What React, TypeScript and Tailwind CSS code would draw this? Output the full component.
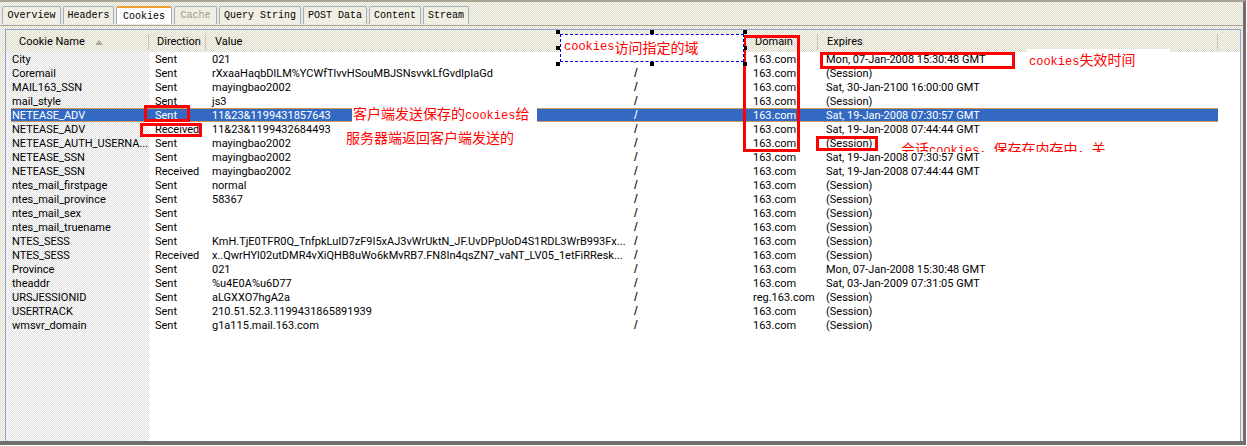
import React from 'react'

const tabs = [
  { label: 'Overview', w: 'w-[59px]' },
  { label: 'Headers', w: 'w-[51px]' },
  { label: 'Cookies', w: 'w-[56px]', active: true },
  { label: 'Cache', w: 'w-[43px]', disabled: true },
  { label: 'Query String', w: 'w-[82px]' },
  { label: 'POST Data', w: 'w-[64px]' },
  { label: 'Content', w: 'w-[52px]' },
  { label: 'Stream', w: 'w-[46px]' },
]

const s2100 = 'Sat, 30-Jan-2100 16:00:00 GMT'
const jan7 = 'Mon, 07-Jan-2008 15:30:48 GMT'
const jan19a = 'Sat, 19-Jan-2008 07:30:57 GMT'
const jan19b = 'Sat, 19-Jan-2008 07:44:44 GMT'
const sess = '(Session)'

const rows = [
  ['City', 'Sent', '021', '163.com', jan7],
  ['Coremail', 'Sent', 'rXxaaHaqbDlLM%YCWfTlvvHSouMBJSNsvvkLfGvdIpIaGd', '163.com', sess],
  ['MAIL163_SSN', 'Sent', 'mayingbao2002', '163.com', s2100],
  ['mail_style', 'Sent', 'js3', '163.com', sess],
  ['NETEASE_ADV', 'Sent', '11&23&1199431857643', '163.com', jan19a],
  ['NETEASE_ADV', 'Received', '11&23&1199432684493', '163.com', jan19b],
  ['NETEASE_AUTH_USERNA...', 'Sent', 'mayingbao2002', '163.com', sess],
  ['NETEASE_SSN', 'Sent', 'mayingbao2002', '163.com', jan19a],
  ['NETEASE_SSN', 'Received', 'mayingbao2002', '163.com', jan19b],
  ['ntes_mail_firstpage', 'Sent', 'normal', '163.com', sess],
  ['ntes_mail_province', 'Sent', '58367', '163.com', sess],
  ['ntes_mail_sex', 'Sent', '', '163.com', sess],
  ['ntes_mail_truename', 'Sent', '', '163.com', sess],
  ['NTES_SESS', 'Sent', 'KmH.TjE0TFR0Q_TnfpkLuID7zF9I5xAJ3vWrUktN_JF.UvDPpUoD4S1RDL3WrB993Fx...', '163.com', sess],
  ['NTES_SESS', 'Received', 'x..QwrHYl02utDMR4vXiQHB8uWo6kMvRB7.FN8In4qsZN7_vaNT_LV05_1etFiRResk...', '163.com', sess],
  ['Province', 'Sent', '021', '163.com', jan7],
  ['theaddr', 'Sent', '%u4E0A%u6D77', '163.com', 'Sat, 03-Jan-2009 07:31:05 GMT'],
  ['URSJESSIONID', 'Sent', 'aLGXXO7hgA2a', 'reg.163.com', sess],
  ['USERTRACK', 'Sent', '210.51.52.3.1199431865891939', '163.com', sess],
  ['wmsvr_domain', 'Sent', 'g1a115.mail.163.com', '163.com', sess],
]

const SELECTED = 4
const dither = 'bg-[repeating-conic-gradient(#dcd9c6_0_25%,#fbfaf4_0_50%)] bg-[length:2px_2px]'
const greyDither = 'bg-[repeating-conic-gradient(#dedede_0_25%,#ffffff_0_50%)] bg-[length:2px_2px]'
const selectedRow = 'bg-[repeating-conic-gradient(#2c62bd_0_25%,#3a71c6_0_50%)] bg-[length:2px_2px] text-white shadow-[inset_0_1px_0_#c79a5c,inset_0_-1px_0_#c79a5c]'
const redBox = 'absolute border-[3px] border-[#f00]'
const redText = "absolute text-[14px] leading-[16px] text-[#f00] whitespace-nowrap font-['Noto_Sans_CJK_SC',sans-serif]"

function Latin({ children }: { children: React.ReactNode }) {
  return <span className="font-['Liberation_Mono',monospace] text-[12px]">{children}</span>
}

function Handle({ hidden }: { hidden?: boolean }) {
  return <div className={`h-[4px] w-[4px] ${hidden ? '' : 'bg-black'}`} />
}

export default function App() {
  return (
    <div className="relative h-[446px] w-[1247px] overflow-hidden bg-white font-['Roboto',sans-serif] text-[11px] text-black">
      <div className={`flex h-[445px] w-[1246px] flex-col border-t-2 border-r-[3px] border-b-[4px] border-[#6f6f6f] border-t-[#a8a496] ${dither}`}>
        {/* tabs */}
        <div className="flex gap-[2px] pl-[2px] pt-[4px] font-['Liberation_Mono',monospace] text-[10px]">
          {tabs.map((t) => (
            <div
              key={t.label}
              className={`flex h-[18px] items-center justify-center rounded-t-[2px] border border-b-0 border-[#9fb0c0] ${t.w} ${
                t.active ? 'border-t-2 border-t-[#f0a030] bg-white' : 'bg-[#f1efe4]'
              } ${t.disabled ? 'text-[#9a9a80]' : ''}`}
            >
              {t.label}
            </div>
          ))}
        </div>

        {/* panel */}
        <div className="mt-[1px] flex min-h-0 flex-1 flex-col border-t border-[#a8a496] pl-[5px] pr-[2px] pt-[3px]">
          <div className="flex min-h-0 flex-1 flex-col border-x border-t border-[#8ea6d0]">
            <div className={`flex h-[22px] shrink-0 items-center pt-[2px] ${dither}`}>
              <div className="flex w-[143px] items-center border-r border-[#c9c6b4] pl-[13px]">
                Cookie Name
                <span className="ml-[10px] h-0 w-0 border-x-[4px] border-b-[5px] border-x-transparent border-b-[#b0ad9c]" />
              </div>
              <div className="w-[57px] border-r border-[#c9c6b4] pl-[8px]">Direction</div>
              <div className="w-[539px] pl-[9px]">Value</div>
              <div className="w-[73px] border-x border-[#c9c6b4] pl-[9px]">Domain</div>
              <div className="w-[400px] border-r border-[#c9c6b4] pl-[9px]">Expires</div>
            </div>
            <div className="flex min-h-0 flex-1">
              {/* name column is shaded down to the bottom */}
              <div className={`w-[143px] shrink-0 pl-[5px] ${greyDither}`}>
                {rows.map((r, i) => (
                  <div key={i} className={`h-[14px] whitespace-nowrap pl-[1px] leading-[16px] ${i === SELECTED ? selectedRow : ''}`}>
                    {r[0]}
                  </div>
                ))}
              </div>
              <div className="min-w-0 flex-1 bg-white">
                {rows.map((r, i) => (
                  <div key={i} className={`flex h-[14px] w-[1069px] leading-[16px] ${i === SELECTED ? selectedRow : ''}`}>
                    <div className="w-[57px] shrink-0 pl-[6px]">{r[1]}</div>
                    <div className="w-[422px] shrink-0 whitespace-nowrap pl-[6px]">{r[2]}</div>
                    <div className="w-[125px] shrink-0 pl-[6px] font-['Liberation_Sans',sans-serif] text-[13px] leading-[14px]">/</div>
                    <div className="w-[73px] shrink-0">{r[3]}</div>
                    <div className="whitespace-nowrap">{r[4]}</div>
                  </div>
                ))}
              </div>
            </div>
          </div>
        </div>
      </div>

      {/* hand drawn annotations on top of the capture */}
      <div className={`${redBox} left-[144px] top-[105px] h-[17px] w-[46px]`} />
      <div className={`${redBox} left-[140px] top-[123px] h-[14px] w-[62px]`} />
      <div className={`${redBox} left-[743px] top-[35px] h-[117px] w-[57px]`} />
      <div className={`${redBox} left-[820px] top-[52px] h-[17px] w-[195px]`} />
      <div className={`${redBox} left-[816px] top-[136px] h-[15px] w-[62px]`} />

      <div className="absolute left-[1027px] top-[49px] h-[20px] w-[143px] bg-white" />
      <div className={`${redText} left-[1029px] top-[51px]`}><Latin>cookies</Latin>失效时间</div>
      <div className="absolute left-[352px] top-[107px] h-[16px] w-[185px] bg-white" />
      <div className={`${redText} left-[353px] top-[105px]`}>客户端发送保存的<Latin>cookies</Latin>给</div>
      <div className={`${redText} left-[346px] top-[129px]`}>服务器端返回客户端发送的</div>
      <div className="absolute left-[901px] top-[140px] h-[12px] w-[210px] overflow-hidden">
        <div className="whitespace-nowrap text-[14px] leading-[16px] text-[#f00] font-['Noto_Sans_CJK_SC',sans-serif]">会话<Latin>cookies</Latin>，保存在内存中，关</div>
      </div>

      {/* selected text box with its resize handles */}
      <div className="absolute left-[556px] top-[30px] flex h-[36px] w-[191px] flex-col justify-between">
        <div className="flex justify-between"><Handle /><Handle /><Handle /></div>
        <div className="flex justify-between"><Handle /><Handle hidden /><Handle /></div>
        <div className="flex justify-between"><Handle /><Handle /><Handle /></div>
      </div>
      <div className="absolute left-[560px] top-[34px] flex h-[28px] w-[184px] items-start border border-dashed border-[#0000e0] bg-white pl-[3px] pt-[2px] text-[14px] leading-[20px] text-[#f00] font-['Noto_Sans_CJK_SC',sans-serif]">
        <Latin>cookies</Latin>访问指定的域
      </div>
    </div>
  )
}
